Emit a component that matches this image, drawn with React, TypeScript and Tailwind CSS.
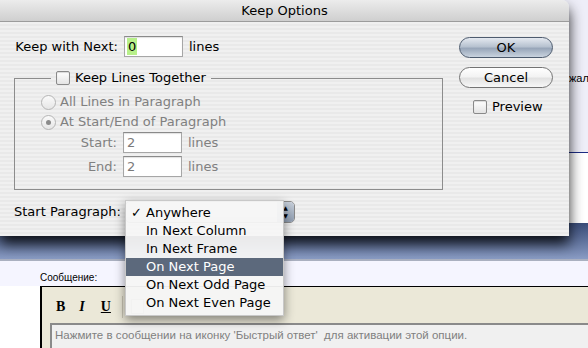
import React from "react"

const ui = "font-['DejaVu_Sans',sans-serif] text-[13px]"
const stripes =
    "bg-[repeating-linear-gradient(180deg,#f0f0f0_0px,#f0f0f0_2px,#e9e9e9_2px,#e9e9e9_4px)]"

function Checkbox() {
    return <span className="inline-block w-[14px] h-[14px] rounded-[2px] border border-[#8a8a8a] bg-gradient-to-b from-white to-[#e4e4e4] shadow-[inset_0_1px_1px_rgba(0,0,0,0.15)]" />
}

function Radio({ on }: { on?: boolean }) {
    return <span className="flex w-[15px] h-[15px] rounded-full border border-[#b4b4b4] bg-gradient-to-b from-[#fafafa] to-[#e6e6e6] items-center justify-center">
        {on && <span className="w-[5px] h-[5px] rounded-full bg-[#8a8a8a]" />}
    </span>
}

function Field({ value, selected, disabled }: { value: string, selected?: boolean, disabled?: boolean }) {
    return <div className={"w-[59px] h-[21px] bg-white border border-[#a6a6a6] border-t-[#8a8a8a] shadow-[inset_0_1px_1px_rgba(0,0,0,0.12)] flex items-center pl-[2px] " + (disabled ? "text-[#7a7a7a] bg-[#f6f6f6]" : "text-black")}>
        {selected
            ? <span className="bg-[#b8f08a] px-[1px] leading-[17px]">{value}</span>
            : <span className="px-[1px]">{value}</span>}
    </div>
}

function AquaButton({ label, primary }: { label: string, primary?: boolean }) {
    return <button
        type="button"
        className={
            "w-[94px] h-[21px] rounded-full border flex items-center justify-center text-black " +
            (primary
                ? "border-[#4d5b6e] bg-[linear-gradient(180deg,#e4e9f0_0%,#b7c2d0_45%,#98a6b9_55%,#c9d3df_100%)]"
                : "border-[#747474] bg-[linear-gradient(180deg,#ffffff_0%,#f3f3f3_45%,#e2e2e2_55%,#f7f7f7_100%)]")
        }>
        {label}
    </button>
}

const menuItems = ["Anywhere", "In Next Column", "In Next Frame", "On Next Page", "On Next Odd Page", "On Next Even Page"]

function PopupMenu() {
    return <div className={"absolute left-[125px] top-[200px] w-[159px] pt-[3px] pb-[3px] bg-[#f6f6f6]/95 shadow-[0_4px_10px_rgba(0,0,0,0.45)] border border-[#c8c8c8] " + ui}>
        {menuItems.map((m, i) => (
            <div
                key={m}
                className={"h-[18px] flex items-center " + (i == 3 ? "bg-[#5c697c] text-white" : "text-black")}>
                <span className="w-[20px] pl-[5px] text-[13px]">{i == 0 ? "✓" : ""}</span>
                {m}
            </div>
        ))}
    </div>
}

function Dialog() {
    return <div className={"absolute left-0 top-0 w-[569px] h-[236px] rounded-tr-[7px] overflow-hidden shadow-[0_8px_14px_rgba(0,0,0,0.85)] " + ui}>
        <div className="h-[22px] bg-gradient-to-b from-[#ececec] to-[#cfcfcf] border-b border-[#9c9c9c] flex items-center justify-center text-black">
            Keep Options
        </div>
        <div className={"h-[214px] flex " + stripes}>
            <div className="w-[443px] pl-[14px] pt-[14px] whitespace-nowrap">
                <div className="flex items-center h-[21px]">
                    <span className="w-[104px] text-right">Keep with Next:</span>
                    <span className="ml-[6px]"><Field value="0" selected /></span>
                    <span className="ml-[6px]">lines</span>
                </div>
                <fieldset className="mt-[13px] border border-[#8c8c8c] h-[120px] pl-[26px]">
                    <legend className="ml-[10px] px-[5px] flex items-center gap-[5px] h-[16px]">
                        <Checkbox />
                        <span>Keep Lines Together</span>
                    </legend>
                    <div className="text-[#808080] pt-[6px]">
                        <div className="flex items-center gap-[4px] h-[20px]">
                            <Radio />
                            <span>All Lines in Paragraph</span>
                        </div>
                        <div className="flex items-center gap-[4px] h-[20px]">
                            <Radio on />
                            <span>At Start/End of Paragraph</span>
                        </div>
                        <div className="-ml-[27px] flex items-center h-[21px]">
                            <span className="w-[103px] text-right">Start:</span>
                            <span className="ml-[6px]"><Field value="2" disabled /></span>
                            <span className="ml-[6px]">lines</span>
                        </div>
                        <div className="-ml-[27px] flex items-center h-[21px] mt-[3px]">
                            <span className="w-[103px] text-right">End:</span>
                            <span className="ml-[6px]"><Field value="2" disabled /></span>
                            <span className="ml-[6px]">lines</span>
                        </div>
                    </div>
                </fieldset>
                <div className="flex items-center h-[24px] mt-[10px]">
                    <span className="w-[104px] text-right">Start Paragraph:</span>
                    <div className="ml-[7px] w-[170px] h-[22px] rounded-[5px] border border-[#8a8a8a] bg-gradient-to-b from-white to-[#e8e8e8] flex justify-end">
                        <div className="w-[17px] h-full rounded-r-[4px] bg-gradient-to-b from-[#c8d0db] to-[#8f9db0] flex flex-col items-center justify-center gap-[2px] text-[6px] leading-[6px] text-black">
                            <span>▲</span>
                            <span>▼</span>
                        </div>
                    </div>
                </div>
            </div>
            <div className="pl-[16px] pt-[15px] flex flex-col">
                <AquaButton label="OK" primary />
                <div className="mt-[9px]"><AquaButton label="Cancel" /></div>
                <div className="mt-[9px] pl-[14px] flex items-center gap-[5px]">
                    <Checkbox />
                    <span>Preview</span>
                </div>
            </div>
        </div>
    </div>
}

function Page() {
    return <div className="font-['Liberation_Sans',sans-serif]">
        <div className="h-[152px] bg-[#eeeef8] pt-[70px] pl-[569px] text-[11px] whitespace-nowrap">жал</div>
        <div className="h-px bg-[#1c2c84]" />
        <div className="h-[70px] bg-white" />
        <div className="h-[36px] bg-gradient-to-b from-[#3a4c78] to-[#8a9cc4]" />
        <div className="h-[2px] bg-[#aab0c0]" />
        <div className="h-[25px] bg-[#f5f5ff] flex items-end pl-[40px] pb-[1px] text-[10px] text-black">Сообщение:</div>
        <div className="ml-[40px] border-l-2 border-t border-black bg-[#ebe8d8] h-[62px]">
            <div className="h-[36px] flex items-center pt-[3px] font-['Liberation_Serif',serif] text-[14px] font-bold text-black">
                <span className="ml-[14px]">B</span>
                <span className="ml-[14px] italic">I</span>
                <span className="ml-[16px] underline">U</span>
                <span className="ml-[11px] w-px h-[22px] bg-[#c8c4b4]" />
                <span className="ml-[8px] w-[13px] h-[15px] border border-[#b0ac9c] bg-[#f4f2e8]" />
            </div>
            <div className="ml-[8px] h-[26px] border-t-2 border-l-2 border-[#8a8a8a] bg-[#f0f0f0] pl-[3px] pt-[2px] text-[11.5px] text-[#808080] whitespace-nowrap">
                Нажмите в сообщении на иконку 'Быстрый ответ'&nbsp; для активации этой опции.
            </div>
        </div>
    </div>
}

export default function App() {
    return <div className="relative w-[588px] h-[348px] overflow-hidden bg-white">
        <Page />
        <Dialog />
        <PopupMenu />
    </div>
}
